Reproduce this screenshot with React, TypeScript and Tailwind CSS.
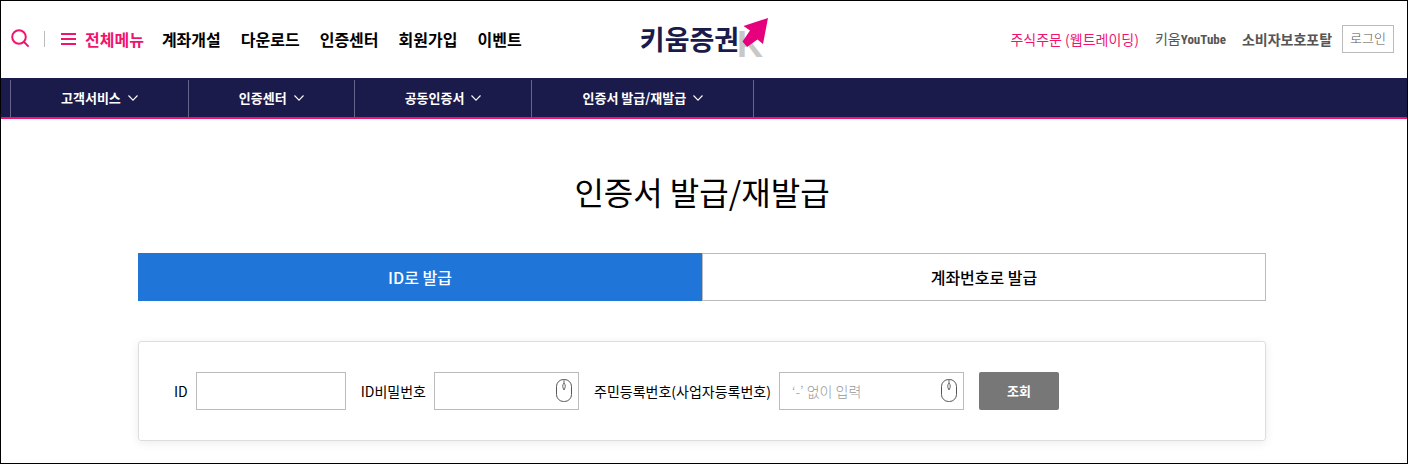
import { useState } from 'react';

const mainMenu = ['계좌개설', '다운로드', '인증센터', '회원가입', '이벤트'];
const pathMenu = ['고객서비스', '인증센터', '공동인증서', '인증서 발급/재발급'];
const tabs = ['ID로 발급', '계좌번호로 발급'];

function SearchIcon() {
  return (
    <svg width="19" height="19" viewBox="0 0 19 19" fill="none" stroke="#f0146e" strokeWidth="2">
      <circle cx="8" cy="8" r="6.8" />
      <path d="M12.8 12.8 17.6 17.6" />
    </svg>
  );
}

function MenuIcon() {
  return (
    <svg width="15" height="12" viewBox="0 0 15 12" fill="#f0146e">
      <path d="M0 0h15v2H0zM0 5h15v2H0zM0 10h15v2H0z" />
    </svg>
  );
}

function ChevronIcon() {
  return (
    <svg width="10" height="6" viewBox="0 0 10 6" fill="none" stroke="#fff" strokeWidth="1.1">
      <path d="M.5.5 5 5.2 9.5.5" />
    </svg>
  );
}

function MouseIcon() {
  return (
    <svg width="16" height="23" viewBox="0 0 16 23" fill="none" stroke="#555">
      <rect x=".5" y=".5" width="15" height="22" rx="7" />
      <path d="M8 .5v3.500M8 4c1.700 2 1.700 4 0 7-1.700-3-1.700-5 0-7z" strokeWidth=".9" />
    </svg>
  );
}

function Logo() {
  return (
    <a href="#" className="flex items-center pl-1 text-[27px] leading-[36px] font-bold text-[#1a1a4b]">
      키움증권
      <svg className="overflow-visible" width="30" height="48" viewBox="0 0 30 48">
        <text x="-2" y="42" fontSize="36" fontWeight="700" fontFamily="Liberation Sans, sans-serif" fill="#c8c8c8">
          K
        </text>
        <path d="M29 3 4.500 11 11 15.500 3.500 26.500 8 32 18.500 24.500 24 29z" fill="#e6007e" />
      </svg>
    </a>
  );
}

interface FieldProps {
  id: string;
  label: string;
  type?: string;
  placeholder?: string;
  width: string;
  mouse?: boolean;
}

function Field({ id, label, type = 'text', placeholder, width, mouse }: FieldProps) {
  return (
    <div className="flex items-center gap-2">
      <label htmlFor={id} className="text-sm text-black">
        {label}
      </label>
      <div className={`relative ${width}`}>
        <input
          id={id}
          type={type}
          placeholder={placeholder}
          className="block h-[38px] w-full border border-[#bbb] bg-white px-3 text-sm font-light placeholder:text-[#999]"
        />
        {mouse && (
          <button type="button" aria-label="마우스 입력" className="absolute top-[7px] right-[7px]">
            <MouseIcon />
          </button>
        )}
      </div>
    </div>
  );
}

export default function App() {
  const [activeTab, setActiveTab] = useState(0);

  return (
    <div className="min-h-screen border border-black bg-white font-['Noto_Sans_CJK_KR',sans-serif] text-black">
      <header className="grid h-[77px] grid-cols-[1fr_auto_1fr] items-center pr-[13px] pb-0.5 pl-[10px]">
        <div className="flex items-center">
          <button type="button" aria-label="검색">
            <SearchIcon />
          </button>
          <span className="mx-[14px] h-4 w-px bg-[#bbb]" />
          <button type="button" className="ml-0.5 flex items-center gap-[9px] font-bold text-[#f0146e]">
            <MenuIcon />
            전체메뉴
          </button>
          <nav className="ml-[18px] flex gap-5 font-bold">
            {mainMenu.map((item) => (
              <a key={item} href="#">
                {item}
              </a>
            ))}
          </nav>
        </div>

        <Logo />

        <div className="flex items-center justify-end text-sm text-[#555]">
          <a href="#" className="text-[#f0146e]">
            주식주문 (웹트레이딩)
          </a>
          <a href="#" className="ml-4">
            키움
            <span className="font-['Roboto_Condensed','Open_Sans_Condensed','Liberation_Sans',sans-serif] text-[13px] font-bold">
              YouTube
            </span>
          </a>
          <a href="#" className="ml-4 font-bold">
            소비자보호포탈
          </a>
          <button type="button" className="ml-[10px] h-7 border border-[#bbb] px-[7px] text-[13px] font-light">
            로그인
          </button>
        </div>
      </header>

      <nav className="flex h-[41px] items-end border-b-2 border-[#f0146e] bg-[#1a1a4b] pl-[9px]">
        {pathMenu.map((item) => (
          <button
            key={item}
            type="button"
            className="flex h-[37px] items-center gap-[7px] border-l border-[#66668a] px-[50px] pb-0.5 text-[13px] font-bold text-white last:border-r"
          >
            {item}
            <ChevronIcon />
          </button>
        ))}
      </nav>

      <main className="pr-1">
        <div className="mx-auto max-w-[1128px]">
          <h1 className="pt-12 text-center text-[32px] leading-[48px]">인증서 발급/재발급</h1>

          <div role="tablist" className="mt-[38px] grid grid-cols-2">
            {tabs.map((tab, i) => (
              <button
                key={tab}
                type="button"
                role="tab"
                aria-selected={activeTab === i}
                onClick={() => setActiveTab(i)}
                className={`h-12 border font-medium ${
                  activeTab === i ? 'border-[#1f75d8] bg-[#1f75d8] text-white' : 'border-[#bbb] bg-white text-black'
                }`}
              >
                {tab}
              </button>
            ))}
          </div>

          <form className="mt-10 flex flex-wrap gap-[15px] rounded-[3px] border border-[#ddd] px-[35px] py-[30px] shadow-[0_2px_10px_rgba(0,0,0,0.08)]">
            <Field id="user-id" label="ID" width="w-[150px]" />
            <Field id="user-pw" label="ID비밀번호" type="password" width="w-[145px]" mouse />
            <Field
              id="reg-no"
              label="주민등록번호(사업자등록번호)"
              placeholder="‘-’ 없이 입력"
              width="w-[185px]"
              mouse
            />
            <button type="button" className="h-[38px] w-20 rounded-[2px] bg-[#777] text-[13px] font-bold text-white">
              조회
            </button>
          </form>
        </div>
      </main>
    </div>
  );
}
